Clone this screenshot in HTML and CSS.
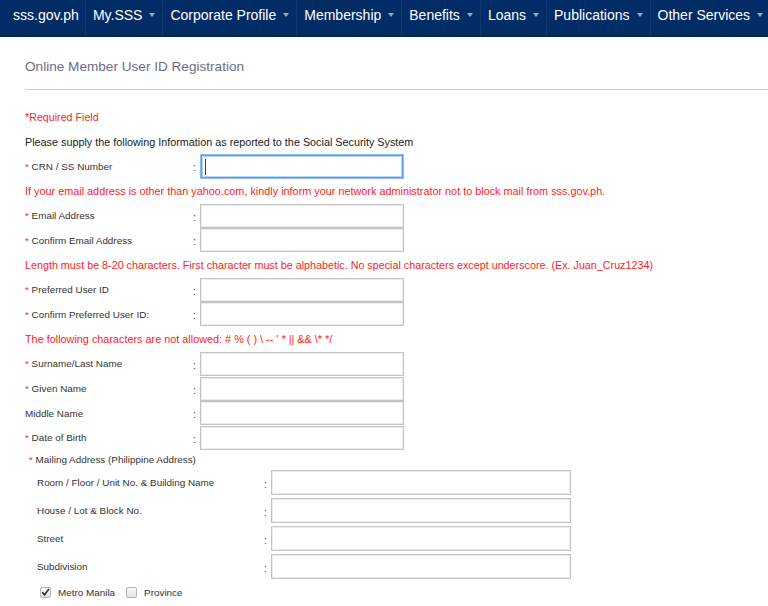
FILE: index.html
```html
<!DOCTYPE html>
<html lang="en">
<head>
<meta charset="utf-8">
<title>Online Member User ID Registration</title>
<link rel="stylesheet" href="styles.css">
</head>
<body>
<nav class="topnav">
  <a class="brand" href="#">sss.gov.ph</a>
  <a class="menu" href="#">My.SSS<span class="caret"></span></a>
  <a class="menu" href="#">Corporate Profile<span class="caret"></span></a>
  <a class="menu" href="#">Membership<span class="caret"></span></a>
  <a class="menu" href="#">Benefits<span class="caret"></span></a>
  <a class="menu" href="#">Loans<span class="caret"></span></a>
  <a class="menu" href="#">Publications<span class="caret"></span></a>
  <a class="menu" href="#">Other Services<span class="caret"></span></a>
</nav>

<main class="page">
  <h1 class="title">Online Member User ID Registration</h1>
  <hr class="rule">

  <form class="reg">
    <div class="line req-note">*Required Field</div>
    <div class="line intro">Please supply the following Information as reported to the Social Security System</div>

    <div class="fields">
      <label class="lbl"><span class="star">*</span> CRN / SS Number</label><span class="colon">:</span>
      <span class="field is-focused"><input class="box" type="text"><span class="cursor"></span></span>

      <div class="msg">If your email address is other than yahoo.com, kindly inform your network administrator not to block mail from sss.gov.ph.</div>

      <label class="lbl"><span class="star">*</span> Email Address</label><span class="colon">:</span>
      <span class="field"><input class="box" type="text"></span>
      <label class="lbl"><span class="star">*</span> Confirm Email Address</label><span class="colon">:</span>
      <span class="field"><input class="box" type="text"></span>

      <div class="msg msg-tight">Length must be 8-20 characters. First character must be alphabetic. No special characters except underscore. (Ex. Juan_Cruz1234)</div>

      <label class="lbl"><span class="star">*</span> Preferred User ID</label><span class="colon">:</span>
      <span class="field"><input class="box" type="text"></span>
      <label class="lbl"><span class="star">*</span> Confirm Preferred User ID:</label><span class="colon">:</span>
      <span class="field"><input class="box" type="text"></span>

      <div class="msg">The following characters are not allowed: # % ( ) \ -- ' * || &amp;&amp; \* */</div>

      <label class="lbl"><span class="star">*</span> Surname/Last Name</label><span class="colon">:</span>
      <span class="field"><input class="box" type="text"></span>
      <label class="lbl"><span class="star">*</span> Given Name</label><span class="colon">:</span>
      <span class="field"><input class="box" type="text"></span>
      <label class="lbl">Middle Name</label><span class="colon">:</span>
      <span class="field"><input class="box" type="text"></span>
      <label class="lbl"><span class="star">*</span> Date of Birth</label><span class="colon">:</span>
      <span class="field"><input class="box" type="text"></span>
    </div>

    <div class="mailing"><span class="star">*</span> Mailing Address (Philippine Address)</div>

    <div class="address">
      <label class="lbl">Room / Floor / Unit No. &amp; Building Name</label><span class="colon">:</span>
      <span class="field"><input class="box wide" type="text"></span>
      <label class="lbl">House / Lot &amp; Block No.</label><span class="colon">:</span>
      <span class="field"><input class="box wide" type="text"></span>
      <label class="lbl">Street</label><span class="colon">:</span>
      <span class="field"><input class="box wide" type="text"></span>
      <label class="lbl">Subdivision</label><span class="colon">:</span>
      <span class="field"><input class="box wide" type="text"></span>
    </div>

    <div class="checks">
      <label class="opt">
        <span class="tick is-on"><svg viewBox="0 0 11 11" width="11" height="11"><path d="M2.6 5.6 L4.5 8 L8.6 2.4" fill="none" stroke="#2b2b2b" stroke-width="1.6" stroke-linecap="round" stroke-linejoin="round"/></svg></span>
        Metro Manila
      </label>
      <label class="opt">
        <span class="tick"></span>
        Province
      </label>
    </div>
  </form>
</main>
</body>
</html>
```

FILE: styles.css
```css
html, body {
  margin: 0;
  padding: 0;
  background: #ffffff;
}

body {
  font-family: "Liberation Sans", Arial, Helvetica, sans-serif;
  color: #333333;
}

/* ---------- top navigation bar ---------- */
.topnav {
  display: flex;
  height: 37px;
  background: #022c66;
  border-bottom: 1px solid #01244f;
  box-sizing: border-box;
}

.topnav a {
  display: flex;
  align-items: center;
  height: 100%;
  padding-bottom: 7px;
  box-sizing: border-box;
  color: #ffffff;
  text-decoration: none;
  font-size: 14px;
  white-space: nowrap;
  border-right: 1px solid #0e3a73;
}

.topnav .brand {
  padding-left: 13px;
  padding-right: 6px;
}

.topnav .menu {
  padding-left: 7px;
  padding-right: 7px;
}

.topnav .menu:last-child {
  border-right: none;
}

.caret {
  display: inline-block;
  width: 0;
  height: 0;
  margin-left: 7px;
  margin-top: 1px;
  border-top: 4px solid #9ba8bf;
  border-left: 3px solid transparent;
  border-right: 3px solid transparent;
}

/* ---------- page body ---------- */
.page {
  padding-left: 25px;
}

.title {
  margin: 20px 0 0;
  font-size: 13.6px;
  line-height: 20px;
  font-weight: normal;
  color: #6d6d86;
}

.rule {
  margin: 12px 0 0;
  height: 0;
  border: none;
  border-top: 1px solid #cdcdcd;
}

.reg {
  margin-top: 14.6px;
}

.line {
  height: 24.7px;
  display: flex;
  align-items: center;
  white-space: nowrap;
}

.req-note {
  color: #ff1c1c;
  font-size: 10.7px;
}

.intro {
  color: #222222;
  font-size: 10.8px;
}

/* label : input rows */
.fields {
  display: grid;
  grid-template-columns: 168px 7px 204px;
  grid-auto-rows: 24.7px;
  align-items: center;
}

.lbl {
  font-size: 9.9px;
  color: #333333;
  white-space: nowrap;
}

.star {
  color: #ff1c1c;
}

.colon {
  font-size: 10.5px;
  color: #4e3d46;
  text-align: left;
  padding-top: 2px;
}

.field {
  position: relative;
  display: block;
}

.box {
  display: block;
  width: 204px;
  height: 24px;
  margin: 0;
  padding: 0 4px;
  box-sizing: border-box;
  border: 1px solid #c4c4c4;
  box-shadow: inset 0 0 0 1px #ebebeb;
  background: #ffffff;
  outline: none;
  font: inherit;
}

.box.wide {
  width: 300px;
  height: 25px;
}

.is-focused .box {
  width: 202px;
  height: 23px;
  margin-left: 1px;
  border: 1px solid #5c9be6;
  box-shadow: 0 0 0 1px #8dbcf2, inset 0 0 0 1px #b9d6f7;
}

/* text caret inside the focused field */
.cursor {
  position: absolute;
  left: 5px;
  top: 4px;
  width: 1px;
  height: 16px;
  background: #3a3a3a;
}

.msg {
  grid-column: 1 / -1;
  color: #ff1c1c;
  font-size: 10.85px;
  white-space: nowrap;
}

.msg-tight {
  font-size: 10.75px;
}

/* mailing address block */
.mailing {
  height: 18.5px;
  padding-left: 4px;
  padding-top: 4px;
  box-sizing: border-box;
  font-size: 9.9px;
  color: #333333;
  white-space: nowrap;
}

.address {
  display: grid;
  grid-template-columns: 227px 7px 300px;
  grid-auto-rows: 28px;
  align-items: center;
  padding-left: 12px;
}

/* region checkboxes */
.checks {
  display: flex;
  align-items: center;
  height: 24px;
  padding-left: 15px;
  gap: 11px;
}

.opt {
  display: flex;
  align-items: center;
  gap: 7px;
  font-size: 9.9px;
  color: #333333;
}

.tick {
  display: block;
  width: 11px;
  height: 11px;
  box-sizing: border-box;
  border: 1px solid #b4b4b4;
  border-radius: 2px;
  background: linear-gradient(#fbfbfb, #e2e2e2);
}

.tick svg {
  display: block;
  margin: -1px;
}
```
